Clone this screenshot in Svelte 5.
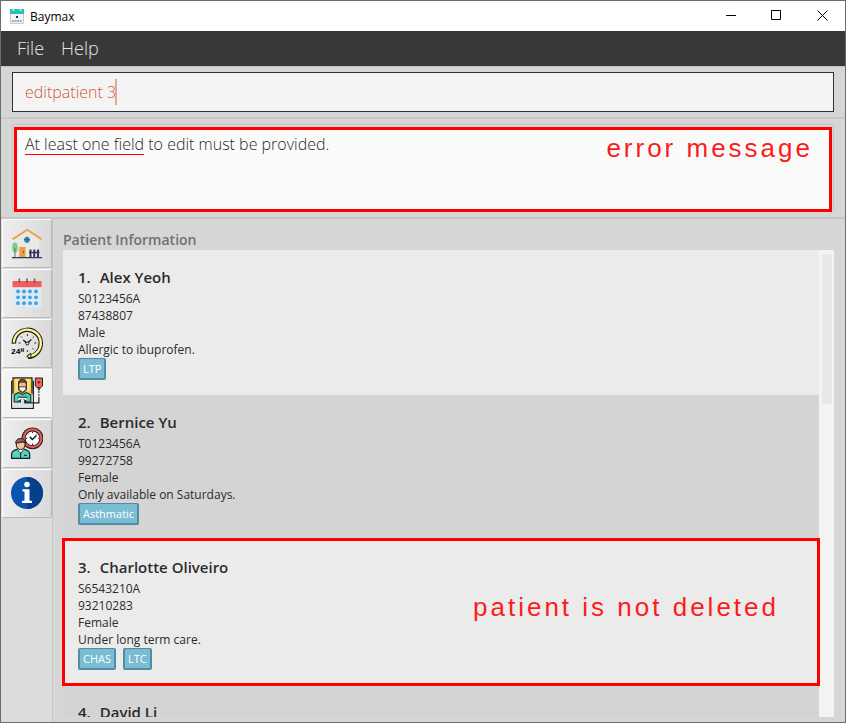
<script>
  let command = $state('editpatient 3');
  let selected = $state(3);

  const tabs = ['Home', 'Calendar', 'Schedule', 'Patients', 'Appointments', 'Information'];

  const patients = [
    { name: 'Alex Yeoh', nric: 'S0123456A', phone: '87438807', gender: 'Male', remark: 'Allergic to ibuprofen.', tags: ['LTP'] },
    { name: 'Bernice Yu', nric: 'T0123456A', phone: '99272758', gender: 'Female', remark: 'Only available on Saturdays.', tags: ['Asthmatic'] },
    { name: 'Charlotte Oliveiro', nric: 'S6543210A', phone: '93210283', gender: 'Female', remark: 'Under long term care.', tags: ['CHAS', 'LTC'], note: 'patient is not deleted' },
    { name: 'David Li', tags: [] }
  ];
</script>

<div class="window">
  <header class="titlebar">
    <svg class="app-icon" viewBox="0 0 14 16" aria-hidden="true">
      <path d="M.5 5H13.5V15.5H.5Z" fill="#f4f4f4" stroke="#c4cccc" />
      <path d="M0 1H14V6H0Z" fill="#1fc4b4" />
      <path d="M3.5 0V3M10.5 0V3" stroke="#dff5f3" stroke-width="1.4" />
      <path d="M6 8H8V10H6Z" fill="#333" />
      <path d="M2 13H12" stroke="#666" stroke-dasharray="2 .6" />
    </svg>
    <span class="app-name">Baymax</span>
    <button class="control" aria-label="Minimize"><svg viewBox="0 0 11 11"><path d="M1 5.5H11" /></svg></button>
    <button class="control" aria-label="Maximize"><svg viewBox="0 0 11 11"><path d="M.5 .5H9.5V9.5H.5Z" /></svg></button>
    <button class="control" aria-label="Close"><svg viewBox="0 0 11 11"><path d="M.5 .5L10.5 10.5M10.5 .5L.5 10.5" /></svg></button>
  </header>

  <nav class="menu">
    <button>File</button>
    <button>Help</button>
  </nav>

  <section class="command">
    <input aria-label="Command" bind:value={command} spellcheck="false" />
    <span class="caret"></span>
  </section>

  <section class="result">
    <div class="result-frame">
      <div class="result-box">
        <p><span class="marked">At least one field</span> to edit must be provided.</p>
        <span class="annotation">error message</span>
      </div>
    </div>
  </section>

  <div class="body">
    <div class="tabs" role="tablist" aria-orientation="vertical">
      {#each tabs as tab, i}
        <button role="tab" aria-label={tab} aria-selected={selected === i} class:selected={selected === i} onclick={() => (selected = i)}>
          <svg viewBox="0 0 32 32" aria-hidden="true">
            {#if i === 0}
              <path d="M7 10L16.3 4L28 11V30H7Z" fill="#ebe9e4" />
              <path d="M1.6 12.2L16.3 2.8L30.5 12.2" fill="none" stroke="#ea9c45" stroke-width="1.8" />
              <circle cx="16" cy="12.8" r="3.1" fill="#45a9dc" />
              <path d="M16 9.8V15.8M13 12.8H19" stroke="#245584" />
              <ellipse cx="4" cy="20.5" rx="2.8" ry="5" fill="#78ce88" />
              <path d="M4 21V30" stroke="#657b62" />
              <path d="M8.3 20H14.5V30.5H8.3Z" fill="#ed9d40" />
              <path d="M12.5 24V26" stroke="#7b552d" />
              <path d="M19.5 22.5V30M23.3 22.5V30M27 22.5V30" stroke="#303764" stroke-width="2" />
              <path d="M18 25.5H28.5M1 30.7H31" stroke="#303764" stroke-width="1.3" />
            {:else if i === 1}
              <path d="M1.5 9H30.5V30.5H1.5Z" fill="#dbeaf4" />
              <path d="M1.5 4H30.5V10.2H1.5Z" fill="#f45b59" />
              <path d="M8.3 1.5V6M16 1.5V6M23.5 1.5V6" stroke="#5c6876" stroke-width="1.6" />
              {#each [14.4, 20.3, 26.2] as y}
                {#each [7, 13, 19, 25] as x}
                  <circle cx={x} cy={y} r="1.9" fill="#489fe0" />
                {/each}
              {/each}
            {:else if i === 2}
              <path d="M2.8 16.6A13.5 13.5 0 1 1 17 29.8" fill="none" stroke="#171717" stroke-width="4.4" />
              <path d="M2.8 15.6A13.5 13.5 0 1 1 18.5 29.4" fill="none" stroke="#fff392" stroke-width="2.4" />
              <path d="M19.7 26.2L15.7 29.4L20 31.4Z" fill="#fff392" stroke="#171717" />
              <path d="M16.4 7V9M10 9.5L11.3 10.8M23 9.5L21.7 10.8M25.3 16H23.3M7.5 16H9.5M22.7 22.5L21.4 21.2M16.4 25V23" stroke="#333" />
              <path d="M12.2 13L16.3 16.5L20.3 12.4" fill="none" stroke="#111" stroke-width="1.3" />
              <circle cx="16.3" cy="16.5" r="1.5" fill="#fff392" stroke="#111" />
              <text x="0" y="26.5" class="hours">24<tspan dy="-2" class="hour-unit">H</tspan></text>
            {:else if i === 3}
              <path d="M2 .8H21V17.5H2Z" fill="#f3ce4c" stroke="#222" stroke-width="1.3" />
              <path d="M4.5 2.5H18.5V14H4.5Z" fill="#ffe587" />
              <path d="M.7 3.7V31.3H22.3V3.7" fill="none" stroke="#222" stroke-width="1.3" />
              <path d="M1.4 16.5H21.6V30.6H1.4Z" fill="#dce1ea" />
              <path d="M7.6 6.5C7.2 1 15.8 1 15.4 6.5V12C14.5 16.5 8.5 16.5 7.6 12Z" fill="#f6bb88" stroke="#222" />
              <path d="M7.5 7C7 .6 16 .6 15.5 7L14 5.2H9Z" fill="#7f4632" stroke="#222" stroke-width=".7" />
              <path d="M8 9.8H15V12.8L11.5 15L8 12.8Z" fill="#edf4f6" stroke="#222" stroke-width=".8" />
              <path d="M7.5 15.5L3.2 17.8V25H9.5V21.5H13.5V25H19.8V17.8L15.5 15.5L11.5 17.5Z" fill="#45d0ad" stroke="#222" stroke-width="1.1" />
              <path d="M7.5 20.5H15.5V23.3H7.5Z" fill="#f2f4f8" />
              <path d="M6.8 20.2H16.2M6.5 24.8L10.5 22.3M16.5 24.8L12.5 22.3" fill="none" stroke="#222" />
              <path d="M24.3 1H31.5V9L29.5 10.7H26.3L24.3 9Z" fill="#ef625e" stroke="#222" />
              <path d="M27.9 4V6.6M26.6 5.3H29.2" stroke="#6b1f1f" />
              <path d="M26.3 11.2H29.5L27.9 14Z" fill="#222" />
              <path d="M27.9 14V21" fill="none" stroke="#222" stroke-dasharray="2 .8" />
              <path d="M27.9 21V25.8H14V24.2" fill="none" stroke="#222" stroke-width="1.2" />
            {:else if i === 4}
              <circle cx="21.5" cy="11.3" r="8.9" fill="#fff" stroke="#1e1e1e" stroke-width="4" />
              <circle cx="21.5" cy="11.3" r="8.9" fill="none" stroke="#e85a5e" stroke-width="2.2" />
              <path d="M21.5 4.5V6M21.5 16.5V18M14.7 11.3H16.2M26.8 11.3H28.3M16.8 6.6L17.7 7.5M26.2 6.6L25.3 7.5" stroke="#333" />
              <path d="M18.8 9.8L21.3 12.4L25.5 8.5" fill="none" stroke="#111" stroke-width="1.4" />
              <path d="M.6 31.4V27C.6 24 3 23.3 6.8 22.2H12.5C16.5 23.3 18.7 24 18.7 27V31.4Z" fill="#52d2c2" stroke="#1e1e1e" stroke-width="1.2" />
              <path d="M6.5 22.5L9.6 26.5L12.8 22.5V20H6.5Z" fill="#fff" stroke="#1e1e1e" stroke-width=".8" />
              <path d="M9.6 25.5V31M13 28.3H16" stroke="#1e1e1e" />
              <path d="M5.3 15V18C5.5 24 13.7 24 14 18V15Z" fill="#f9c399" stroke="#1e1e1e" />
              <path d="M4.8 16.2C4.2 10 14.7 9.6 14.5 16.2L11.5 14.5C9 16 7 15.7 4.8 16.2Z" fill="#966049" stroke="#1e1e1e" />
            {:else}
              <circle cx="16" cy="16" r="16" fill="#0955ae" />
              <path d="M16 0A16 16 0 0 1 16 32Z" fill="#073f8b" />
              <circle cx="16" cy="7.5" r="2.8" fill="#fff" />
              <path d="M11.5 12.3H18.5V23.5L21 24V26H11V24L13.5 23.5V14.8L11.5 14.3Z" fill="#fff" />
            {/if}
          </svg>
        </button>
      {/each}
    </div>

    <main>
      <h1>Patient Information</h1>
      <div class="list-frame">
        <ol>
          {#each patients as p, i}
            <li class:noted={p.note}>
              <div class="details">
                <h2><span>{i + 1}.</span>{p.name}</h2>
                {#if p.nric}
                  <p>{p.nric}</p>
                  <p>{p.phone}</p>
                  <p>{p.gender}</p>
                  <p>{p.remark}</p>
                {/if}
                <div class="tags">
                  {#each p.tags as tag}<span>{tag}</span>{/each}
                </div>
              </div>
              {#if p.note}<span class="annotation">{p.note}</span>{/if}
            </li>
          {/each}
        </ol>
        <div class="track"><div class="thumb"></div></div>
      </div>
    </main>
  </div>
</div>

<style>
  :global(body) {
    margin: 0;
  }

  .window,
  .window * {
    box-sizing: border-box;
  }

  .window {
    display: flex;
    flex-direction: column;
    height: 100vh;
    border: 1px solid #6c6c6c;
    background: #d6d6d6;
    color: #2b2b2b;
    font-family: "Open Sans", "Noto Sans", sans-serif;
  }

  button {
    margin: 0;
    padding: 0;
    border: 0;
    background: none;
    font: inherit;
    color: inherit;
  }

  h1,
  h2,
  p,
  ol {
    margin: 0;
    padding: 0;
  }

  .titlebar {
    display: flex;
    align-items: center;
    flex: none;
    height: 30px;
    padding-left: 9px;
    background: #fff;
    color: #000;
    font-size: 12px;
  }

  .app-icon {
    width: 14px;
    height: 16px;
    margin-right: 6px;
  }

  .app-name {
    flex: 1;
  }

  .control {
    display: grid;
    place-items: center;
    width: 46px;
    height: 30px;
    padding-bottom: 1px;
  }

  .control svg {
    width: 11px;
    height: 11px;
    fill: none;
    stroke: #000;
  }

  .menu {
    display: flex;
    flex: none;
    gap: 17px;
    height: 35px;
    padding: 0 16px 2px;
    background: #383838;
    color: #e4e4e4;
    font-size: 18px;
    font-weight: 300;
  }

  .command {
    position: relative;
    flex: none;
    padding: 5px 11px;
    border-top: 1px solid #c4c4c4;
    border-bottom: 2px solid #c8c8c8;
  }

  .command input {
    display: block;
    width: 100%;
    height: 40px;
    padding: 0 12px;
    border: 1px solid #303030;
    border-radius: 0;
    outline: 0;
    background: #f4f4f4;
    color: #d0593c;
    font: 300 16px "Open Sans", "Noto Sans", sans-serif;
  }

  .caret {
    position: absolute;
    top: 12px;
    left: 114px;
    width: 2px;
    height: 26px;
    background: #e2a99d;
  }

  .result {
    flex: none;
    padding: 5px 11px;
    border-bottom: 2px solid #c6c6c6;
  }

  .result-frame {
    padding: 2px 1px 0;
    border: 1px solid #c6c6c6;
    border-bottom: 0;
  }

  .result-box {
    display: flex;
    justify-content: space-between;
    height: 85px;
    padding: 3px 16px 3px 8px;
    border: 3px solid #ff0000;
    background: #fafafa;
  }

  .result-box p {
    padding-top: 1px;
    font-size: 16px;
    font-weight: 300;
    line-height: 20px;
  }

  .marked {
    display: inline-block;
    height: 21px;
    border-bottom: 1px solid #ff0000;
  }

  .annotation {
    color: #fb1c1c;
    font: 26px/30px "Liberation Sans", Arial, sans-serif;
    letter-spacing: 3px;
  }

  .body {
    display: flex;
    flex: 1;
    min-height: 0;
  }

  .tabs {
    display: flex;
    flex-direction: column;
    flex: none;
    gap: 1px;
    width: 52px;
    padding: 0 1px;
    border-right: 1px solid #c6c6c6;
    background: #dcdcdc;
  }

  .tabs button {
    display: grid;
    place-items: center;
    width: 50px;
    height: 49px;
    padding-bottom: 1px;
    border: 1px solid #b8b8b8;
    border-top-color: #fff;
    border-left-color: #fff;
    border-radius: 2px;
    background: linear-gradient(90deg, #eeeeee, #d9d9d9);
  }

  .tabs button.selected {
    border-right-color: #f3f3f3;
    background: #f3f3f3;
  }

  .tabs svg {
    width: 32px;
    height: 32px;
  }

  .hours {
    font: 700 8px "Liberation Mono", monospace;
  }

  .hour-unit {
    font-size: 6px;
  }

  main {
    display: flex;
    flex: 1;
    flex-direction: column;
    min-width: 0;
    padding: 11px 11px 5px 10px;
  }

  h1 {
    flex: none;
    height: 20px;
    color: #707070;
    font-size: 14px;
    font-weight: 600;
    line-height: 20px;
  }

  .list-frame {
    display: flex;
    flex: 1;
    min-height: 0;
  }

  ol {
    flex: 1;
    margin: 0 -1px;
    padding: 0 1px;
    overflow-y: auto;
    scrollbar-width: none;
    list-style: none;
  }

  li {
    display: flex;
    align-items: center;
    justify-content: space-between;
    min-height: 145px;
    padding: 15px 40px 15px 15px;
    background: #d4d4d4;
  }

  li:nth-child(odd) {
    background: #ebebeb;
  }

  .noted {
    position: relative;
  }

  .noted .annotation {
    padding-bottom: 12px;
  }

  .noted::after {
    content: "";
    position: absolute;
    inset: -2px -1px -1px;
    border: 3px solid #ff0000;
    pointer-events: none;
  }

  .details {
    align-self: flex-start;
    font-size: 12px;
    line-height: 17px;
  }

  h2 {
    display: flex;
    gap: 9px;
    padding-bottom: 1px;
    font-size: 15px;
    font-weight: 600;
    line-height: 24px;
  }

  .tags {
    display: flex;
    gap: 7px;
  }

  .tags span {
    height: 22px;
    padding: 1px 3px;
    border: 2px solid #508ca2;
    border-top-width: 1px;
    border-radius: 2px;
    background: #7abcd4;
    color: #fff;
    font-size: 11px;
  }

  .track {
    flex: none;
    width: 15px;
    padding: 4px 2px 4px 3px;
    background: #f3f3f3;
  }

  .thumb {
    height: 150px;
    border-radius: 3px;
    background: #e7e7e7;
  }
</style>
